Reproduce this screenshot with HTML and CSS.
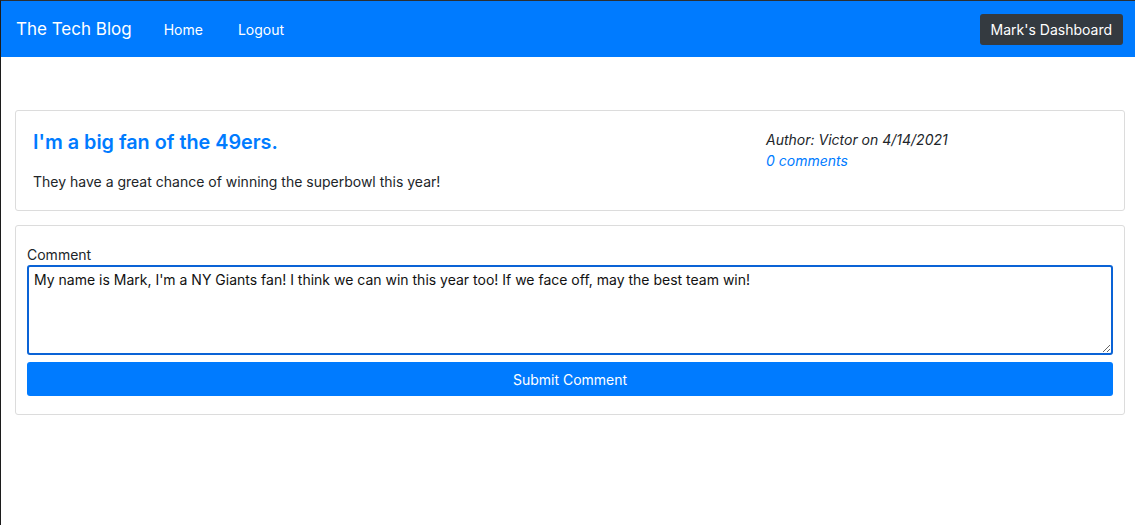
FILE: index.html
```html
<!DOCTYPE html>
<html lang="en">
<head>
<meta charset="utf-8">
<title>The Tech Blog</title>
<link rel="stylesheet" href="styles.css">
</head>
<body>
<nav class="navbar">
  <a class="brand" href="#">The Tech Blog</a>
  <ul class="nav-links">
    <li><a href="#">Home</a></li>
    <li><a href="#">Logout</a></li>
  </ul>
  <a class="dash-btn" href="#">Mark's Dashboard</a>
</nav>
<main class="container">
  <article class="card post">
    <div class="post-main">
      <h2 class="post-title">I'm a big fan of the 49ers.</h2>
      <p class="post-body">They have a great chance of winning the superbowl this year!</p>
    </div>
    <div class="post-meta">
      <p class="author">Author: Victor on 4/14/2021</p>
      <a class="comments" href="#">0 comments</a>
    </div>
  </article>
  <form class="card comment-form">
    <label class="label" for="comment">Comment</label>
    <textarea id="comment" class="textarea">My name is Mark, I'm a NY Giants fan! I think we can win this year too! If we face off, may the best team win!</textarea>
    <button type="button" class="submit">Submit Comment</button>
  </form>
</main>
</body>
</html>
```
FILE: styles.css
```css
* { box-sizing: border-box; }
html, body { height: 100%; }
body {
  margin: 0;
  font-family: "Inter", "Liberation Sans", Arial, sans-serif;
  font-size: 14px;
  color: #212529;
  background: #fff;
  border-top: 1px solid #2b2f33;
  border-left: 1px solid #1c1c1c;
}
.navbar {
  display: flex;
  align-items: center;
  height: 56px;
  background: #007bff;
  padding: 0 12px 0 15px;
}
.brand {
  color: #fff;
  text-decoration: none;
  font-size: 17px;
  margin-right: 15px;
}
.nav-links {
  display: flex;
  list-style: none;
  margin: 0;
  padding: 0;
  flex: 1;
}
.nav-links a {
  display: block;
  color: #fff;
  text-decoration: none;
  font-size: 14px;
  padding: 8px 17px;
}
.nav-links li:first-child a { padding-right: 18px; }
.dash-btn {
  background: #343a40;
  color: #fff;
  text-decoration: none;
  font-size: 14px;
  padding: 6px 11px;
  border-radius: 3px;
  line-height: 19px;
  margin-top: 1px;
}
.container {
  padding: 53px 10px 0 14px;
}
.card {
  border: 1px solid #dcdcdc;
  border-radius: 3px;
  background: #fff;
}
.post {
  display: flex;
  height: 101px;
  padding: 18px 17px;
  margin-bottom: 14px;
}
.post-main { flex: 0 0 733px; }
.post-title {
  margin: 0;
  color: #007bff;
  font-size: 19.8px;
  font-weight: 600;
  line-height: 27px;
}
.post-body {
  margin: 16px 0 0;
  font-size: 14px;
  line-height: 20px;
}
.post-meta {
  font-style: italic;
  font-size: 14px;
  line-height: 21px;
  padding-top: 0;
}
.author { margin: 0; }
.comments { color: #007bff; text-decoration: none; }
.comment-form {
  display: flex;
  flex-direction: column;
  padding: 19px 11px 17px;
  height: 190px;
}
.label {
  font-size: 14px;
  line-height: 20px;
}
.textarea {
  height: 90px;
  border: 2px solid #0a63d6;
  border-radius: 3px;
  font-family: inherit;
  font-size: 14px;
  line-height: 19px;
  padding: 3px 5px;
  color: #111;
  resize: vertical;
  outline: none;
}
.submit {
  margin-top: 7px;
  height: 34px;
  border: none;
  border-radius: 3px;
  background: #007bff;
  color: #fff;
  font-family: inherit;
  font-size: 14px;
}
```
